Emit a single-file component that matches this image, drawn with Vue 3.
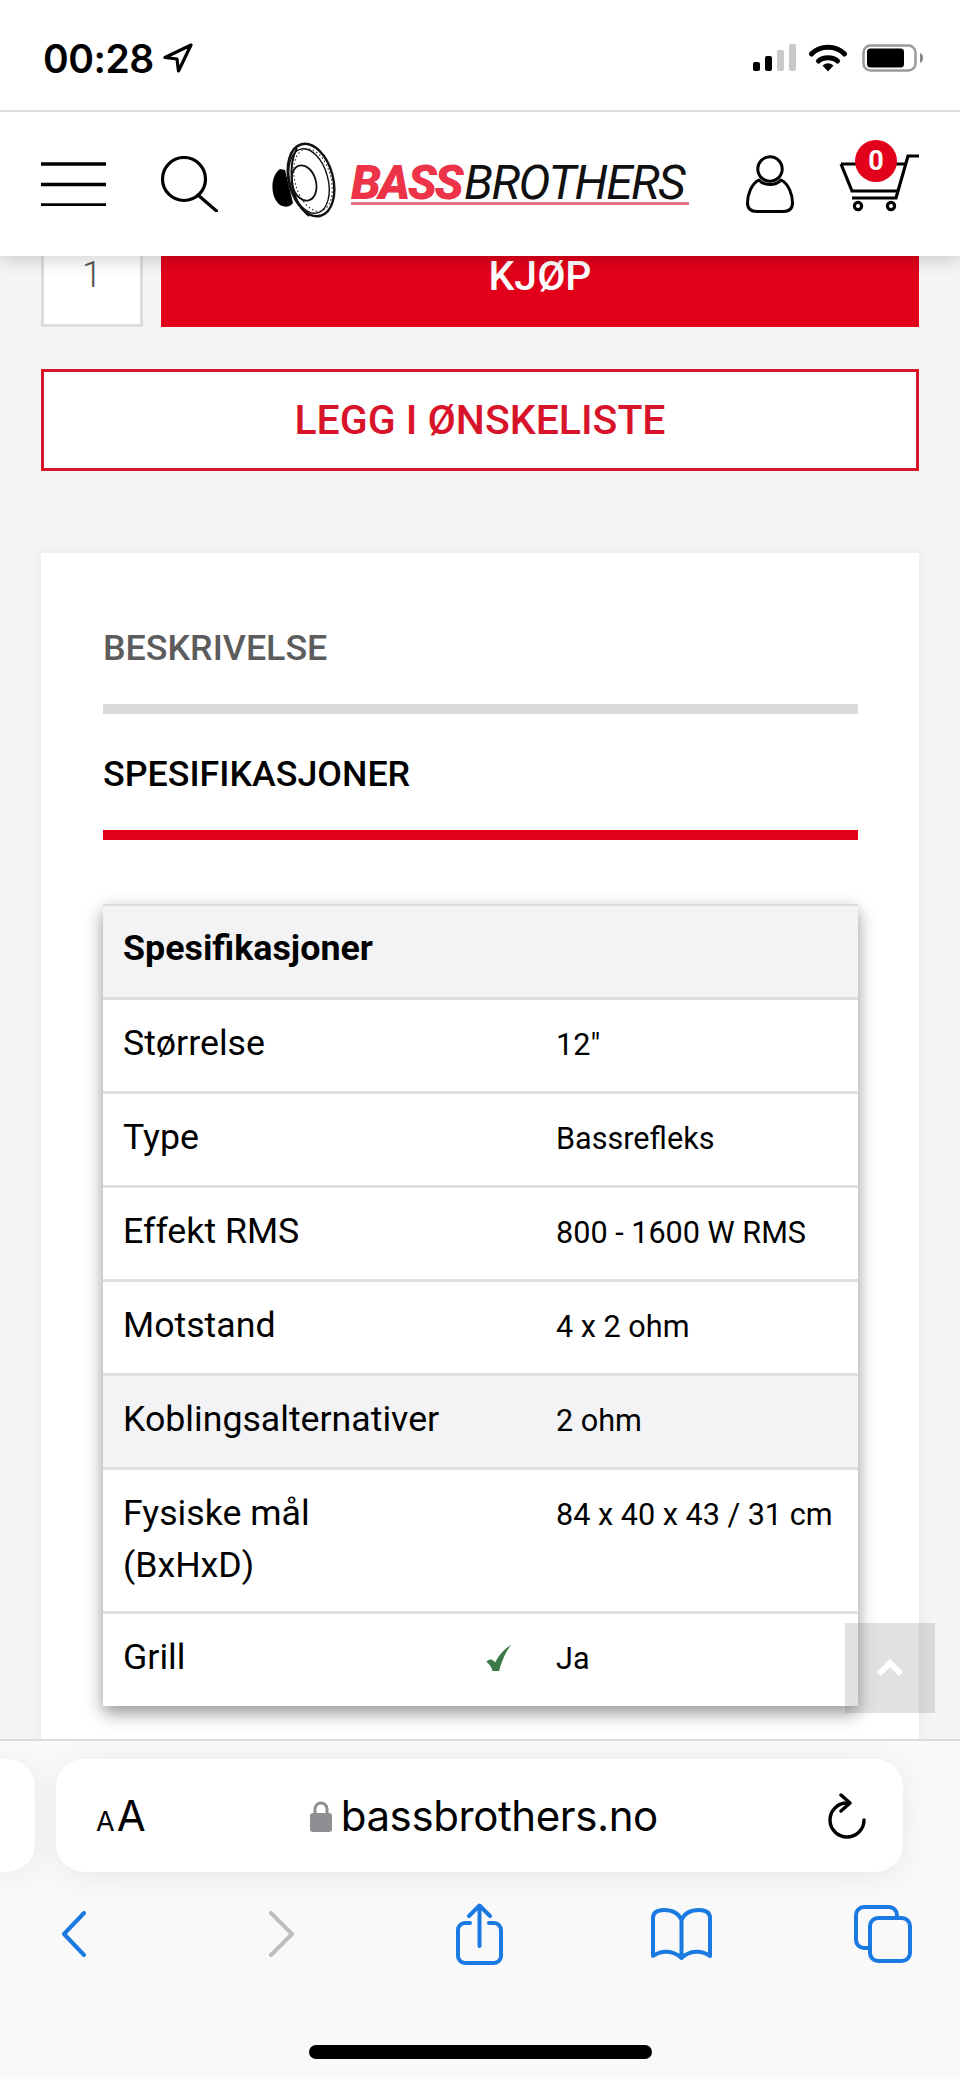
<template>
  <div class="screen">
    <div class="top">
      <div class="statusbar">
        <span class="time">00:28</span>
        <svg class="loc" width="30" height="30" viewBox="0 0 30 30"><path d="M28 2 L2 14.5 L14 16 L15.5 28 Z" fill="none" stroke="#000" stroke-width="3.2" stroke-linejoin="round"/></svg>
        <div class="status-right">
          <svg width="44" height="28" viewBox="0 0 44 28">
            <rect x="0" y="18" width="7" height="9" rx="2" fill="#000"/>
            <rect x="12" y="12" width="7" height="15" rx="2" fill="#000"/>
            <rect x="24" y="6" width="7" height="21" rx="2" fill="#c9c9c9"/>
            <rect x="36" y="0" width="7" height="27" rx="2" fill="#c9c9c9"/>
          </svg>
          <svg class="wifi" width="38" height="28" viewBox="0 0 38 28">
            <path d="M2.5 10 C11 1 27 1 35.5 10" fill="none" stroke="#000" stroke-width="5" stroke-linecap="round"/>
            <path d="M9.5 17 C14 12.5 24 12.5 28.5 17" fill="none" stroke="#000" stroke-width="5" stroke-linecap="round"/>
            <path d="M13.5 21.5 Q19 17 24.5 21.5 L19 27.5 Z" fill="#000"/>
          </svg>
          <svg class="battery" width="62" height="28" viewBox="0 0 62 28">
            <rect x="1.5" y="1.5" width="52" height="25" rx="7" fill="none" stroke="#999" stroke-width="2.5"/>
            <rect x="5" y="4.5" width="37" height="19" rx="3.5" fill="#000"/>
            <path d="M58 9 C62 10 62 18 58 19 Z" fill="#888"/>
          </svg>
        </div>
      </div>
      <header class="header">
        <svg width="65" height="44" viewBox="0 0 65 44" class="burger">
          <path d="M0 2 H65 M0 22.5 H65 M0 43 H65" stroke="#000" stroke-width="3.4"/>
        </svg>
        <svg class="search" width="58" height="56" viewBox="0 0 58 56">
          <circle cx="24" cy="23" r="21.5" fill="none" stroke="#000" stroke-width="3.2"/>
          <path d="M38 39 L56.5 55" stroke="#000" stroke-width="3.2" stroke-linecap="round"/>
        </svg>
        <div class="logo">
          <svg class="speaker" width="66" height="80" viewBox="0 0 66 80">
            <path d="M9 27 C0 33 -1 51 6 60 C10 66 19 66 22 61 L14 28 Z" fill="#000"/>
            <g fill="none" stroke="#111">
              <ellipse cx="40" cy="38" rx="22" ry="37" transform="rotate(-15 40 38)" stroke-width="2.4"/>
              <ellipse cx="38" cy="39" rx="19" ry="33" transform="rotate(-15 38 39)" stroke-width="1.4"/>
              <ellipse cx="42" cy="38" rx="18" ry="32" transform="rotate(-15 42 38)" stroke-width="1" stroke-dasharray="1.5 2.5"/>
              <ellipse cx="33" cy="41" rx="12" ry="18" transform="rotate(-15 33 41)" stroke-width="1.8"/>
              <path d="M26 6 C17 22 18 58 38 74" stroke-width="2"/>
            </g>
          </svg>
          <div class="wordmark"><span class="bass">BASS</span><span class="brothers">BROTHERS</span></div>
        </div>
        <svg class="user" width="48" height="58" viewBox="0 0 48 58">
          <circle cx="24" cy="14" r="12.2" fill="none" stroke="#000" stroke-width="3"/>
          <path d="M13 25 C5 29 1.5 40 1.5 48 C1.5 54 5 56.5 11 56.5 H37 C43 56.5 46.5 54 46.5 48 C46.5 40 43 29 35 25 C30 31 18 31 13 25 Z" fill="none" stroke="#000" stroke-width="3" stroke-linejoin="round"/>
        </svg>
        <div class="cart">
          <svg width="86" height="62" viewBox="0 0 86 62">
            <g fill="none" stroke="#000" stroke-width="3.2">
              <path d="M85 6 H74 L62 48 H18"/>
              <path d="M7 14 H72 M7 14 L18 41 H63"/>
              <circle cx="24" cy="56" r="3.6"/>
              <circle cx="57" cy="56" r="3.6"/>
            </g>
          </svg>
          <span class="badge">0</span>
        </div>
      </header>
    </div>

    <main class="page">
      <div class="buy-row">
        <div class="qty">1</div>
        <button class="buy">KJØP</button>
      </div>
      <button class="wish">LEGG I ØNSKELISTE</button>

      <section class="card">
        <div class="tab">BESKRIVELSE</div>
        <div class="tab active">SPESIFIKASJONER</div>
        <div class="spec">
          <div class="spec-row head">Spesifikasjoner</div>
          <div v-for="row in rows" :key="row.label" class="spec-row" :class="{ shaded: row.shaded }">
            <div class="label">{{ row.label }}</div>
            <svg v-if="row.check" class="check" width="26" height="28" viewBox="0 0 26 28">
              <path d="M25.5 0.5 C20 7 16 16 13 27 L6.5 27 C5.5 23 3.5 20 0.5 18 C3 14.5 7 15 9 18.5 C13 11 18 5 25.5 0.5 Z" fill="#3e7a48"/>
            </svg>
            <div class="value">{{ row.value }}</div>
          </div>
        </div>
      </section>
    </main>

    <div class="to-top">
      <svg width="30" height="20" viewBox="0 0 30 20"><path d="M4 16 L15 5 L26 16" fill="none" stroke="#fff" stroke-width="6"/></svg>
    </div>

    <footer class="browser">
      <div class="url-row">
        <div class="prev-tab"></div>
        <div class="url">
          <span class="aa"><small>A</small>A</span>
          <span class="address">
            <svg width="22" height="32" viewBox="0 0 22 32">
              <path d="M5 14 V9 a6 6 0 0 1 12 0 V14" fill="none" stroke="#8e8e93" stroke-width="3"/>
              <rect x="0" y="13" width="22" height="19" rx="3" fill="#8e8e93"/>
            </svg>
            bassbrothers.no
          </span>
          <svg width="38" height="46" viewBox="0 0 38 46">
            <path d="M19 10 A17 17 0 1 0 36 27" fill="none" stroke="#000" stroke-width="3.4" stroke-linecap="round"/>
            <path d="M13 2 L22 10 L13 18" fill="none" stroke="#000" stroke-width="3.4" stroke-linecap="round" stroke-linejoin="round"/>
          </svg>
        </div>
      </div>
      <nav class="nav">
        <svg width="25" height="46" viewBox="0 0 25 46"><path d="M23 2 L3 23 L23 44" fill="none" stroke="#1a7ae2" stroke-width="4" stroke-linecap="round" stroke-linejoin="round"/></svg>
        <svg width="27" height="46" viewBox="0 0 27 46"><path d="M3 2 L24 23 L3 44" fill="none" stroke="#bdbdbd" stroke-width="4" stroke-linecap="round" stroke-linejoin="round"/></svg>
        <svg width="47" height="62" viewBox="0 0 47 62">
          <g fill="none" stroke="#1a7ae2" stroke-width="4" stroke-linecap="round" stroke-linejoin="round">
            <path d="M23.5 3 V43 M13 13 L23.5 2.5 L34 13"/>
            <path d="M14 20 H9 a7 7 0 0 0 -7 7 V53 a7 7 0 0 0 7 7 H38 a7 7 0 0 0 7 -7 V27 a7 7 0 0 0 -7 -7 H33"/>
          </g>
        </svg>
        <svg width="61" height="52" viewBox="0 0 61 52">
          <path d="M30.5 12 C27 4 20 2 13 2 C7 2 2 4 2 10 V48 C10 42 22 42 30.5 50 C39 42 51 42 59 48 V10 C59 4 54 2 48 2 C41 2 34 4 30.5 12 Z M30.5 12 V50" fill="none" stroke="#1a7ae2" stroke-width="4" stroke-linejoin="round"/>
        </svg>
        <svg width="58" height="58" viewBox="0 0 58 58">
          <g fill="none" stroke="#1a7ae2" stroke-width="4">
            <path d="M14 43 H10 a8 8 0 0 1 -8 -8 V10 a8 8 0 0 1 8 -8 H35 a8 8 0 0 1 8 8 V13"/>
            <rect x="16" y="13" width="40" height="43" rx="8"/>
          </g>
        </svg>
      </nav>
      <div class="home"></div>
    </footer>
  </div>
</template>

<script setup>
const rows = [
  { label: 'Størrelse', value: '12"' },
  { label: 'Type', value: 'Bassrefleks' },
  { label: 'Effekt RMS', value: '800 - 1600 W RMS' },
  { label: 'Motstand', value: '4 x 2 ohm' },
  { label: 'Koblingsalternativer', value: '2 ohm', shaded: true },
  { label: 'Fysiske mål (BxHxD)', value: '84 x 40 x 43 / 31 cm' },
  { label: 'Grill', value: 'Ja', check: true }
]
</script>

<style>
html, body { margin: 0; background: #f5f5f5; }
</style>

<style scoped>
.screen {
  position: relative;
  width: 960px;
  height: 2079px;
  display: flex;
  flex-direction: column;
  overflow: hidden;
  background: #f5f5f5;
  font-family: Roboto, "Liberation Sans", sans-serif;
  color: #000;
}
.top {
  position: relative;
  z-index: 2;
  background: #fff;
  box-shadow: 0 4px 18px rgba(0, 0, 0, .18);
}
.statusbar {
  height: 112px;
  box-sizing: border-box;
  border-bottom: 2px solid #dcdcdc;
  display: flex;
  align-items: center;
  padding-left: 43px;
  padding-top: 6px;
}
.time {
  font-family: Inter, sans-serif;
  font-weight: 600;
  font-size: 39px;
  letter-spacing: -.5px;
  width: 120px;
}
.status-right {
  margin-left: auto;
  margin-right: 36px;
  display: flex;
  align-items: center;
}
.wifi { margin-left: 12px; }
.battery { margin-left: 15px; }
.header {
  height: 144px;
  box-sizing: border-box;
  display: flex;
  align-items: center;
  padding-left: 41px;
}
.search { margin-left: 54px; }
.logo {
  margin-left: 53px;
  display: flex;
  align-items: center;
  margin-top: -4px;
}
.speaker { flex: none; }
.wordmark {
  margin: 8px 0 4px 14px;
  width: 338px;
  border-bottom: 3px solid #e8707f;
  font-size: 48px;
  line-height: 38px;
  font-style: italic;
  white-space: nowrap;
}
.bass {
  font-weight: 900;
  color: #ec3347;
  letter-spacing: -2.5px;
}
.brothers {
  color: #111;
  letter-spacing: -1.6px;
  margin-left: 3px;
}
.user { margin-left: 57px; }
.cart {
  position: relative;
  margin-left: 40px;
  margin-top: -6px;
  width: 86px;
  height: 62px;
}
.cart svg { display: block; }
.badge {
  position: absolute;
  left: 21px;
  top: -10px;
  width: 42px;
  height: 42px;
  border-radius: 50%;
  background: #e2001a;
  color: #fff;
  font-weight: 700;
  font-size: 27px;
  line-height: 42px;
  text-align: center;
}

.page {
  flex: 1;
  min-height: 0;
  overflow: hidden;
  padding: 0 41px;
}
.buy-row {
  display: flex;
  gap: 18px;
  height: 71px;
}
.qty {
  width: 102px;
  box-sizing: border-box;
  border: 3px solid #ddd;
  border-top: 0;
  background: #fff;
  color: #555;
  font-weight: 300;
  font-size: 36px;
  text-align: center;
  line-height: 39px;
}
.buy {
  flex: 1;
  border: 0;
  padding: 0 0 30px;
  background: #e2001a;
  color: #fff;
  font-family: inherit;
  font-weight: 500;
  font-size: 41px;
  line-height: 41px;
}
.wish {
  display: block;
  width: 100%;
  height: 102px;
  margin-top: 42px;
  box-sizing: border-box;
  border: 3px solid #d8142b;
  background: #fff;
  color: #d8142b;
  font-family: inherit;
  font-weight: 500;
  font-size: 41px;
}
.card {
  margin-top: 82px;
  background: #fff;
  padding: 35px 61px 60px 62px;
  box-shadow: 0 0 14px rgba(0, 0, 0, .06);
}
.tab {
  height: 126px;
  box-sizing: border-box;
  border-bottom: 10px solid #dadada;
  padding-top: 3px;
  display: flex;
  align-items: center;
  font-weight: 500;
  font-size: 35.8px;
  color: #5c5c5c;
}
.tab.active {
  border-bottom-color: #e2001a;
  color: #000;
}
.spec {
  margin-top: 64px;
  border-top: 2px solid #dcdcdc;
  background: #fff;
  box-shadow: 0 7px 16px rgba(0, 0, 0, .42);
}
.spec-row {
  display: flex;
  align-items: flex-start;
  min-height: 94px;
  box-sizing: border-box;
  border-bottom: 3px solid #dfdfdf;
  padding: 17px 20px 20px 20px;
}
.spec-row:last-child {
  border-bottom: 0;
  min-height: 92px;
}
.spec-row.head {
  padding-top: 16px;
  background: #f3f3f5;
  font-weight: 700;
  font-size: 35.8px;
  line-height: 52px;
}
.spec-row.shaded { background: #f3f3f5; }
.label {
  flex: 1;
  max-width: 320px;
  font-size: 35.7px;
  line-height: 52px;
}
.check {
  position: relative;
  margin-top: 13px;
  margin-left: auto;
  margin-right: 44px;
}
.value {
  width: 282px;
  margin-left: auto;
  padding-top: 2px;
  font-size: 30.6px;
  line-height: 52px;
  white-space: nowrap;
}
.check + .value { margin-left: 0; }

.to-top {
  position: absolute;
  z-index: 1;
  left: 845px;
  top: 1623px;
  width: 90px;
  height: 90px;
  background: rgba(120, 120, 120, .22);
  display: flex;
  align-items: center;
  justify-content: center;
}

.browser {
  position: relative;
  z-index: 2;
  height: 340px;
  box-sizing: border-box;
  background: #f9f9f9;
  border-top: 2px solid #dcdcdc;
}
.url-row {
  display: flex;
  gap: 21px;
  padding-top: 18px;
}
.prev-tab {
  width: 35px;
  height: 113px;
  background: #fff;
  border-radius: 0 28px 28px 0;
  box-shadow: 0 4px 30px rgba(0, 0, 0, .07);
}
.url {
  width: 847px;
  height: 113px;
  box-sizing: border-box;
  padding: 0 37px 0 40px;
  background: #fff;
  border-radius: 28px;
  box-shadow: 0 4px 30px rgba(0, 0, 0, .07);
  display: flex;
  align-items: center;
  justify-content: space-between;
}
.aa {
  font-family: Inter, sans-serif;
  font-size: 42px;
  line-height: 1;
}
.aa small { font-size: 27px; margin-right: 2px; }
.address {
  display: flex;
  align-items: center;
  gap: 9px;
  margin-right: 6px;
  font-family: Inter, sans-serif;
  font-size: 42px;
  letter-spacing: -.4px;
}
.nav {
  display: grid;
  grid-template-columns: 146px 270px 126px 278px 126px;
  justify-items: center;
  align-items: center;
  margin-top: 31px;
  height: 62px;
}
.home {
  width: 343px;
  height: 14px;
  border-radius: 7px;
  background: #000;
  margin: 80px 0 0 309px;
}
</style>
